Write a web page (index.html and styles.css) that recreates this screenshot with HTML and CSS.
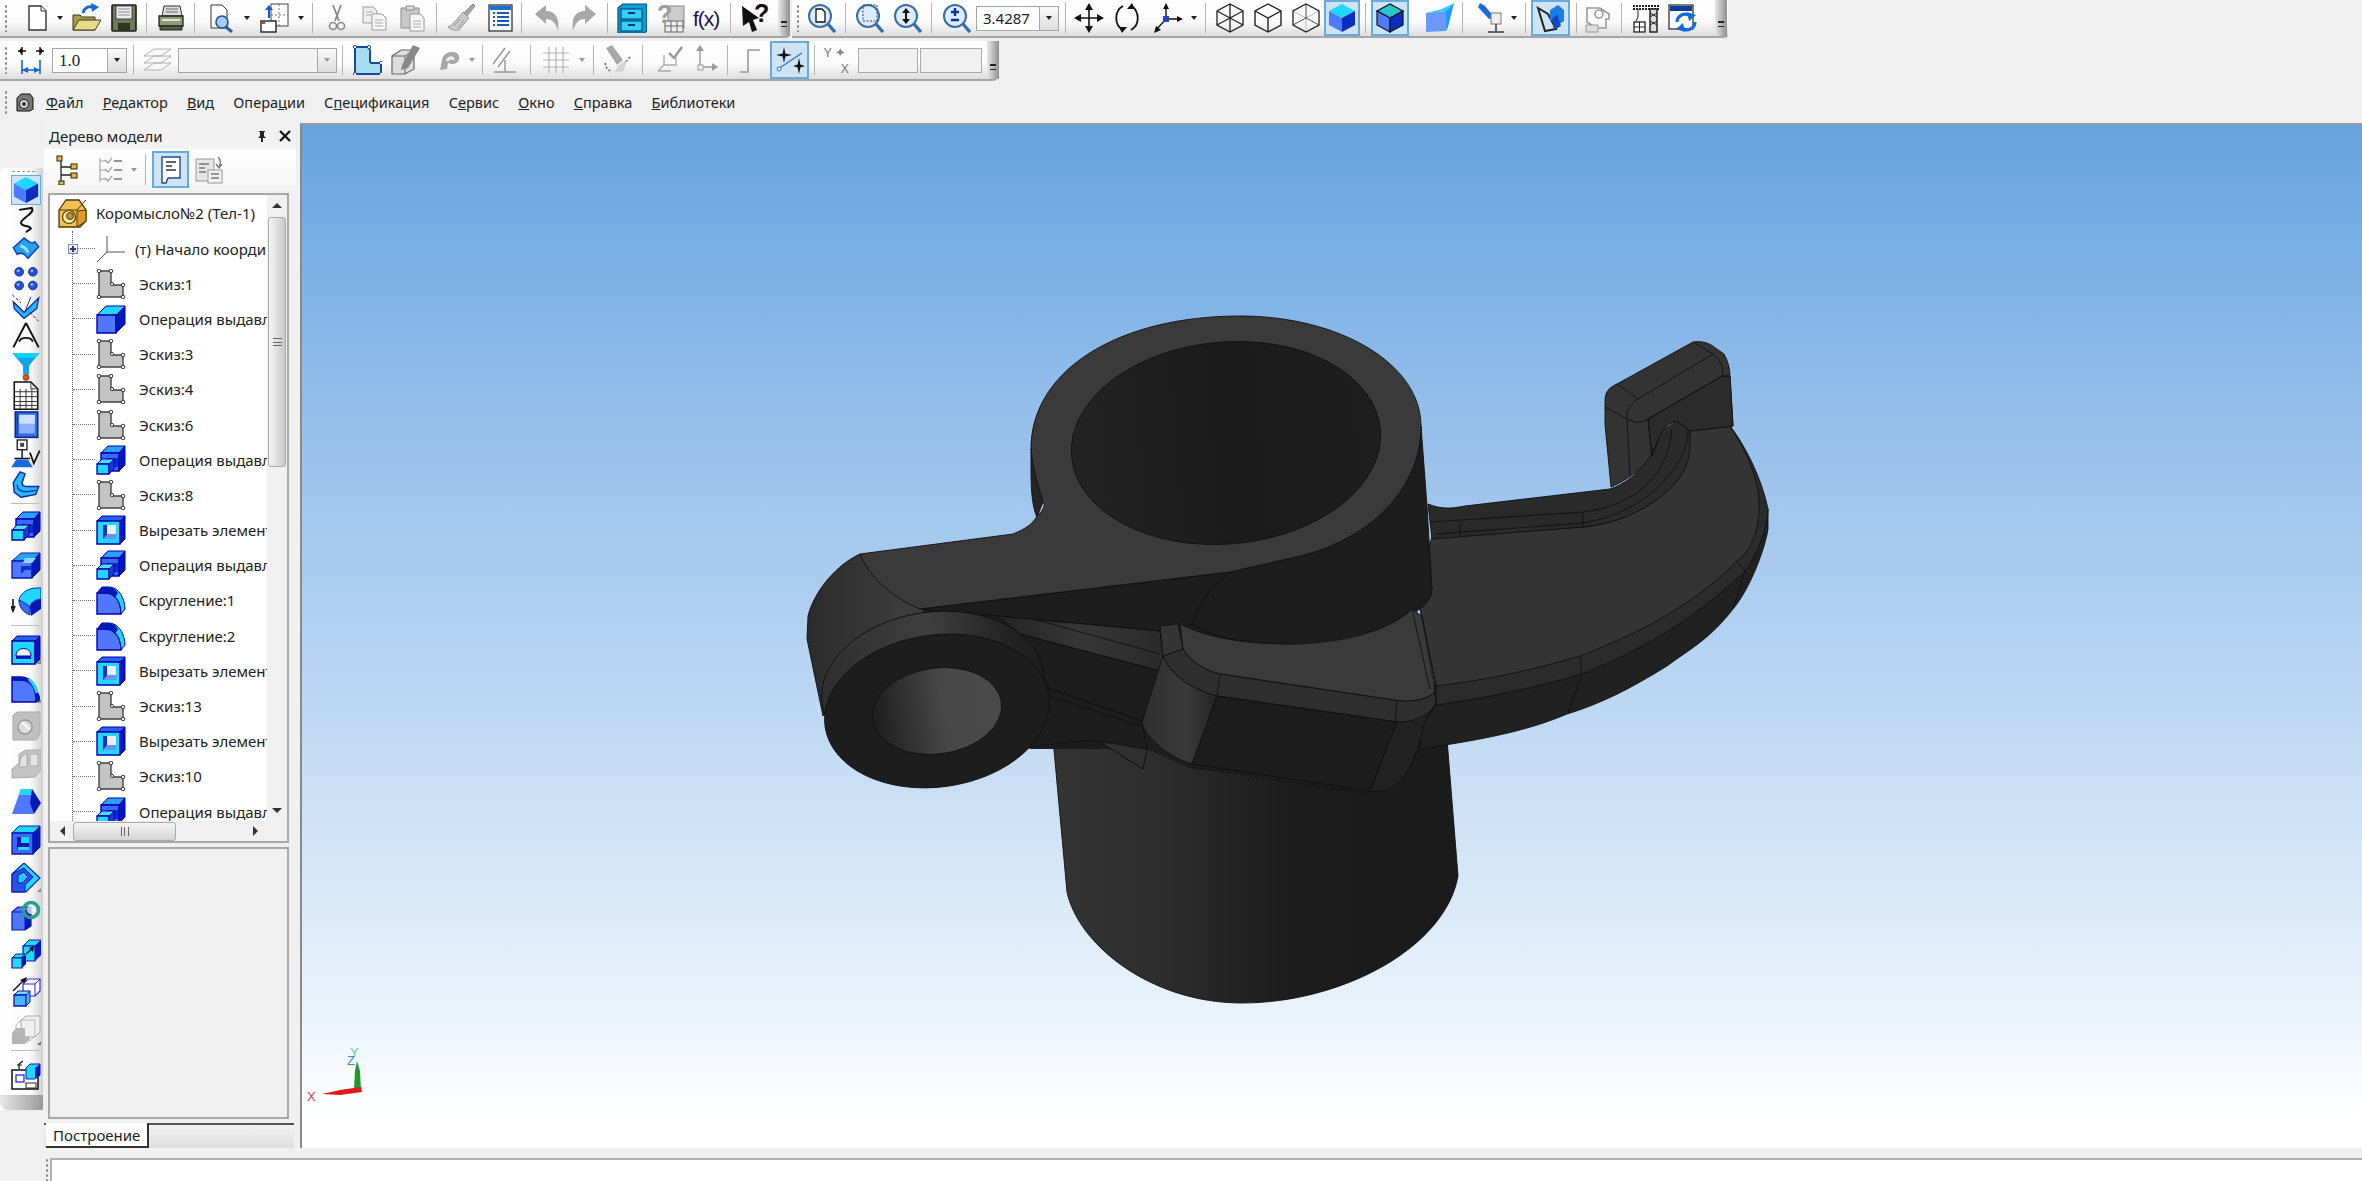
FILE: index.html
```html
<!DOCTYPE html>
<html lang="ru">
<head>
<meta charset="utf-8">
<title>КОМПАС-3D</title>
<link rel="stylesheet" href="styles.css">
</head>
<body>
<svg class="defs" width="0" height="0">
<defs>
<symbol id="new" viewBox="0 0 30 30"><path d="M7 3H19L24 8V27H7Z" fill="#fff" stroke="#333" stroke-width="1.4"/><path d="M19 3V8H24" fill="#eee" stroke="#333"/></symbol>
<symbol id="open" viewBox="0 0 30 30"><path d="M2 12H9L11 14H24V27H2Z" fill="#a89a4a" stroke="#3a3a1a"/><path d="M2 27L8 17H30L24 27Z" fill="#e8dc8a" stroke="#3a3a1a"/><path d="M12 10C13 5 17 3 22 4" fill="none" stroke="#1268d8" stroke-width="3"/><path d="M20 0L28 4L21 9Z" fill="#1268d8"/></symbol>
<symbol id="save" viewBox="0 0 30 30"><rect x="3" y="2" width="24" height="26" rx="1" fill="#6f7a5c" stroke="#1c1c1c" stroke-width="1.6"/><rect x="7" y="3" width="16" height="13" fill="#eee" stroke="#444"/><path d="M9 6H21M9 9H21M9 12H21" stroke="#888"/><rect x="9" y="20" width="12" height="8" fill="#30351f"/></symbol>
<symbol id="print" viewBox="0 0 30 30"><path d="M8 3H24L26 13H6Z" fill="#ddd" stroke="#333"/><path d="M10 6H22M10 9H22" stroke="#666"/><path d="M3 13H27V23H3Z" fill="#8f9a78" stroke="#222" stroke-width="1.3"/><path d="M4 23H26V27H4Z" fill="#565c46" stroke="#222"/><path d="M6 17H24" stroke="#e5e5d5" stroke-width="2"/></symbol>
<symbol id="prev" viewBox="0 0 30 30"><path d="M4 2H15L20 7V25H4Z" fill="#fff" stroke="#333"/><circle cx="15" cy="19" r="6" fill="#a8cdf4" stroke="#22508f" stroke-width="1.6"/><path d="M19 24L25 29" stroke="#2860b0" stroke-width="3"/></symbol>
<symbol id="layout" viewBox="0 0 30 30"><rect x="11" y="1" width="17" height="22" fill="#fff" stroke="#444"/><path d="M19 1V23M11 12H28" stroke="#777" stroke-dasharray="2 2"/><rect x="1" y="18" width="15" height="11" fill="#fff" stroke="#222" stroke-width="1.4"/><rect x="2" y="19" width="3" height="2" fill="#d33"/><path d="M8 15V7H5L9 2L13 7H10V15Z" fill="#1458d8"/></symbol>
<symbol id="sc" viewBox="0 0 30 30"><path d="M11 2L17 18M19 2L13 18" stroke="#888" stroke-width="1.8"/><circle cx="11" cy="23" r="3.5" fill="none" stroke="#888" stroke-width="1.6"/><circle cx="19" cy="23" r="3.5" fill="none" stroke="#888" stroke-width="1.6"/></symbol>
<symbol id="copy" viewBox="0 0 30 30"><path d="M3 4H13L17 8V20H3Z" fill="#eee" stroke="#999"/><path d="M12 11H22L26 15V27H12Z" fill="#f6f6f6" stroke="#999"/><path d="M6 9H13M6 12H11M15 17H23M15 20H23M15 23H23" stroke="#aaa"/></symbol>
<symbol id="paste" viewBox="0 0 30 30"><path d="M4 5H22V25H4Z" fill="#c8c8c8" stroke="#888"/><path d="M9 3H17V7H9Z" fill="#ddd" stroke="#888"/><path d="M13 11H23L27 15V28H13Z" fill="#f6f6f6" stroke="#999"/><path d="M16 18H24M16 21H24M16 24H24" stroke="#aaa"/></symbol>
<symbol id="brush" viewBox="0 0 30 30"><path d="M18 10L27 1L29 3L21 13Z" fill="#aaa" stroke="#888"/><path d="M17 9L23 15L13 27C9 28 5 27 2 24C8 21 12 15 17 9Z" fill="#c9c9c9" stroke="#999"/><path d="M8 23L14 16M12 25L18 17" stroke="#999"/></symbol>
<symbol id="tbl" viewBox="0 0 30 30"><rect x="4" y="2" width="23" height="26" fill="#fff" stroke="#333" stroke-width="1.3"/><rect x="5" y="3" width="21" height="4" fill="#1a6fd0"/><path d="M8 10H10M12 10H24M8 14H10M12 14H24M8 18H10M12 18H24M8 22H10M12 22H24" stroke="#1a5bb0" stroke-width="2"/></symbol>
<symbol id="undo" viewBox="0 0 30 30"><path d="M2 11L13 2V8C22 8 27 14 25 28C23 20 19 16 13 16V21Z" fill="#a8a8a8"/></symbol>
<symbol id="redo" viewBox="0 0 30 30"><path d="M28 11L17 2V8C8 8 3 14 5 28C7 20 11 16 17 16V21Z" fill="#a8a8a8"/></symbol>
<symbol id="cab" viewBox="0 0 30 30"><path d="M1 5L6 1H30V28L27 30H1Z" fill="#0d9ad8" stroke="#0a4a78" stroke-width="1.2"/><rect x="4" y="6" width="21" height="10" fill="#36d0f4" stroke="#063c70"/><rect x="4" y="18" width="21" height="10" fill="#36d0f4" stroke="#063c70"/><rect x="11" y="9" width="7" height="2" fill="#05386a"/><rect x="11" y="21" width="7" height="2" fill="#05386a"/></symbol>
<symbol id="dwg" viewBox="0 0 30 30"><rect x="12" y="3" width="16" height="22" fill="#ccc" stroke="#888"/><rect x="9" y="18" width="18" height="11" fill="#eee" stroke="#666"/><path d="M15 18V29M21 18V29M9 23H27" stroke="#666"/><text x="1" y="20" class="q-g">?</text></symbol>
<symbol id="fx" viewBox="0 0 30 30"><text x="1" y="23" class="fx-t">f(x)</text></symbol>
<symbol id="hlp" viewBox="0 0 30 30"><path d="M2 3L19 15L13 17L17 27L12 29L9 19L3 23Z" fill="#111"/><text x="14" y="19" class="q-b">?</text></symbol>
<symbol id="zpg" viewBox="0 0 30 30"><circle cx="13" cy="13" r="11" fill="#dcecfb" stroke="#3a6da8" stroke-width="2"/><path d="M9 6H15L18 9V19H9Z" fill="#fff" stroke="#111" stroke-width="1.3"/><path d="M21 21L28 29" stroke="#3a6da8" stroke-width="3.4"/></symbol>
<symbol id="zwin" viewBox="0 0 30 30"><circle cx="13" cy="13" r="11" fill="#dcecfb" stroke="#3a6da8" stroke-width="2"/><rect x="8" y="2" width="14" height="16" fill="none" stroke="#444" stroke-dasharray="2 1.5"/><path d="M21 21L28 29" stroke="#3a6da8" stroke-width="3.4"/></symbol>
<symbol id="zud" viewBox="0 0 30 30"><circle cx="13" cy="13" r="11" fill="#dcecfb" stroke="#3a6da8" stroke-width="2"/><path d="M13 5L17 10H9ZM13 21L9 16H17Z" fill="#111"/><path d="M12 9H14V17H12Z" fill="#111"/><path d="M21 21L28 29" stroke="#3a6da8" stroke-width="3.4"/></symbol>
<symbol id="zpm" viewBox="0 0 30 30"><circle cx="13" cy="13" r="11" fill="#dcecfb" stroke="#3a6da8" stroke-width="2"/><path d="M13 5V13M9 9H17M9 17H17" stroke="#10309a" stroke-width="2.4"/><path d="M21 21L28 29" stroke="#3a6da8" stroke-width="3.4"/></symbol>
<symbol id="mv" viewBox="0 0 30 30"><path d="M15 2V28M2 15H28" stroke="#111" stroke-width="1.6"/><path d="M15 0L19 7H11ZM15 30L11 23H19ZM0 15L7 11V19ZM30 15L23 19V11Z" fill="#111"/></symbol>
<symbol id="rot" viewBox="0 0 30 30"><path d="M11 3C2 8 2 22 11 27" fill="none" stroke="#111" stroke-width="1.8"/><path d="M19 3C28 8 28 22 19 27" fill="none" stroke="#111" stroke-width="1.8"/><path d="M7 24L15 24L10 30ZM23 6L15 6L20 0Z" fill="#111"/></symbol>
<symbol id="axs" viewBox="0 0 30 30"><path d="M13 3V16L3 27M13 16H27" stroke="#111" stroke-width="1.4" fill="none"/><path d="M13 0L16 6H10ZM30 16L24 19V13ZM1 30L3 23L8 27Z" fill="#111"/><rect x="10" y="13" width="6" height="6" fill="#2a3fcc"/></symbol>
<symbol id="wf1" viewBox="0 0 30 30"><path d="M15 1L28 8V22L15 29L2 22V8ZM2 8L28 22M28 8L2 22M15 1V29" fill="none" stroke="#222" stroke-width="1.3"/></symbol>
<symbol id="wf2" viewBox="0 0 30 30"><path d="M15 1L28 8V22L15 29L2 22V8ZM2 8L15 15L28 8M15 15V29" fill="none" stroke="#222" stroke-width="1.4"/></symbol>
<symbol id="wf3" viewBox="0 0 30 30"><path d="M2 8L15 15V29M15 15L28 8" fill="none" stroke="#bbb"/><path d="M15 1L28 8V22L15 29L2 22V8ZM2 8L15 1" fill="none" stroke="#222" stroke-width="1.3"/><path d="M2 22L15 15L28 22M15 15V1" fill="none" stroke="#222" stroke-width=".8"/></symbol>
<symbol id="sh1" viewBox="0 0 30 30"><path d="M2 8L15 1L28 8L15 15Z" fill="#1ed8ff"/><path d="M2 8L15 15V29L2 22Z" fill="#4c7bff"/><path d="M15 15L28 8V22L15 29Z" fill="#0b2ec0"/></symbol>
<symbol id="sh2" viewBox="0 0 30 30"><path d="M2 8L15 1L28 8L15 15Z" fill="#27c6c8" stroke="#112" stroke-width="1.2"/><path d="M2 8L15 15V29L2 22Z" fill="#4c7bff" stroke="#112" stroke-width="1.2"/><path d="M15 15L28 8V22L15 29Z" fill="#0b2ec0" stroke="#112" stroke-width="1.2"/></symbol>
<symbol id="prs" viewBox="0 0 30 30"><path d="M2 10L22 8V28L2 29Z" fill="#6a98ff"/><path d="M2 10L18 6L30 0L22 8Z" fill="#28d0ff"/><path d="M22 8L30 0L24 24L22 28Z" fill="#1c9cff"/></symbol>
<symbol id="lamp" viewBox="0 0 30 30"><path d="M4 0L9 3L18 14L13 16L2 4Z" fill="#1d6ad8"/><rect x="15" y="10" width="10" height="11" fill="#eee" stroke="#777"/><path d="M20 21V28M12 29H28" stroke="#666" stroke-width="2"/></symbol>
<symbol id="act" viewBox="0 0 30 30"><path d="M2 5L12 11L20 26L9 28Z" fill="none" stroke="#222" stroke-width="2"/><path d="M14 7L22 2L28 7V18L22 22L14 17Z" fill="#1d7de8"/><path d="M16 16L21 11L25 23L18 27Z" fill="#1248c0"/></symbol>
<symbol id="par" viewBox="0 0 30 30"><path d="M3 5H16L25 11V16H22V25H12L3 19Z" fill="none" stroke="#9a9a9a" stroke-width="1.6"/><circle cx="15" cy="11" r="4" fill="none" stroke="#9a9a9a" stroke-width="1.6"/><path d="M2 22H14V29H2Z" fill="#ddd" stroke="#999"/></symbol>
<symbol id="crane" viewBox="0 0 30 30"><path d="M1 3H28M1 6H28" stroke="#222" stroke-width="2" stroke-dasharray="2 1"/><rect x="18" y="6" width="7" height="23" fill="#ddd" stroke="#222" stroke-width="1.5"/><path d="M18 10L25 14M25 10L18 14M18 18L25 22M25 18L18 22" stroke="#222"/><path d="M6 6V14L4 18" stroke="#222" fill="none"/><rect x="2" y="19" width="11" height="10" fill="#fff" stroke="#222" stroke-width="1.3"/><path d="M7.5 19V29M2 24H13" stroke="#222"/></symbol>
<symbol id="upd" viewBox="0 0 30 30"><rect x="1" y="2" width="24" height="24" fill="#fff" stroke="#222" stroke-width="1.2"/><rect x="2" y="3" width="22" height="5" fill="#0c3c9c"/><path d="M9 19A8 8 0 0 1 22 13M27 19A8 8 0 0 1 14 25" fill="none" stroke="#0f6be0" stroke-width="3.2"/><path d="M19 9L28 12L21 18ZM17 29L8 26L15 20Z" fill="#0f6be0"/></symbol>
<symbol id="dim" viewBox="0 0 30 30"><path d="M5 2V10M1 6H9M23 2V10M19 6H27" stroke="#111" stroke-width="1.4"/><path d="M4 3L6 6L4 9L2 6ZM24 3L26 6L24 9L22 6Z" fill="#111"/><path d="M5 15V29M23 15V29M5 25H23" stroke="#1466d8" stroke-width="1.6"/><path d="M5 25L11 22V28ZM23 25L17 22V28Z" fill="#1466d8"/></symbol>
<symbol id="lay" viewBox="0 0 30 30"><path d="M2 11L12 4H29L19 11ZM2 18L12 11H29L19 18ZM2 25L12 18H29L19 25Z" fill="#f7f7f7" stroke="#aaa" stroke-width=".9"/></symbol>
<symbol id="skt" viewBox="0 0 30 30"><path d="M3 2H15C17 2 19 5 18 9V16C18 17 19 18 20 18H29V29H3Z" fill="#a8dcf0" stroke="#16489c" stroke-width="2"/><g fill="#fff" stroke="#16489c"><circle cx="3" cy="2" r="1.6"/><circle cx="17" cy="2" r="1.6"/><circle cx="29" cy="18" r="1.6"/><circle cx="29" cy="29" r="1.6"/><circle cx="3" cy="29" r="1.6"/></g></symbol>
<symbol id="pen" viewBox="0 0 30 30"><path d="M2 11L11 5H24V24L15 29H2Z" fill="#ddd" stroke="#666" stroke-width="1.2"/><path d="M2 11H15V29M15 11L24 5" stroke="#666" fill="none"/><path d="M12 20L23 0L30 3L18 23L11 25Z" fill="#888"/></symbol>
<symbol id="arc" viewBox="0 0 30 30"><path d="M6 25L8 15C10 6 22 4 25 11C27 17 20 21 14 18L13 24Z" fill="#a8a8a8"/><path d="M13 16C15 12 19 12 19 15" fill="none" stroke="#f0f0f0" stroke-width="3"/></symbol>
<symbol id="pl" viewBox="0 0 30 30"><path d="M3 19L15 3M8 22L20 6M4 27H26M15 15V27" stroke="#999" stroke-width="1.5" fill="none"/></symbol>
<symbol id="grd" viewBox="0 0 30 30"><path d="M8 2V28M15 2V28M22 2V28M2 8H28M2 15H28M2 22H28" stroke="#b5b5b5" stroke-width="1.2"/></symbol>
<symbol id="spot" viewBox="0 0 30 30"><path d="M4 3L10 0L21 15L15 20Z" fill="#a8a8a8"/><path d="M3 18L5 24L10 27M22 20L26 14L29 11" fill="none" stroke="#666" stroke-dasharray="2 2" stroke-width="1.6"/><path d="M16 21L25 14L22 26L12 28Z" fill="#d5d5d5"/></symbol>
<symbol id="chk" viewBox="0 0 30 30"><path d="M3 26L9 20V10M9 20H21V12M3 26H16" fill="none" stroke="#aaa" stroke-width="1.3"/><path d="M14 8L19 13L27 2" fill="none" stroke="#999" stroke-width="2.4"/></symbol>
<symbol id="ort" viewBox="0 0 30 30"><path d="M11 4V22H26" stroke="#999" stroke-width="1.4" fill="none"/><path d="M11 0L15 6H7ZM29 22L23 26V18Z" fill="#999"/><rect x="9" y="20" width="5" height="5" fill="#f0f0f0" stroke="#999"/></symbol>
<symbol id="stp" viewBox="0 0 30 30"><path d="M5 27H13V5H25" fill="none" stroke="#999" stroke-width="1.6"/></symbol>
<symbol id="snap" viewBox="0 0 30 30"><path d="M3 24L27 8" stroke="#3070d0" stroke-width="1.4"/><circle cx="4" cy="24" r="2" fill="#fff" stroke="#3070d0"/><path d="M9 2L10.4 8.6L17 10L10.4 11.4L9 18L7.6 11.4L1 10L7.6 8.6ZM24 13L25.4 19.6L30 21L25.4 22.4L24 29L22.6 22.4L18 21L22.6 19.6Z" fill="#111"/></symbol>
<symbol id="sk" viewBox="0 0 30 30"><path d="M3 2H15V13C15 15 16 16 18 16H27V28H3Z" fill="#c4c4c4" stroke="#444" stroke-width="1.4"/><g fill="#fff" stroke="#333"><circle cx="3" cy="2" r="1.8"/><circle cx="15" cy="2" r="1.8"/><circle cx="16" cy="15" r="1.6"/><circle cx="27" cy="16" r="1.8"/><circle cx="27" cy="28" r="1.8"/><circle cx="3" cy="28" r="1.8"/></g></symbol>
<symbol id="ext" viewBox="0 0 30 30"><path d="M1 11L10 2H29L20 11Z" fill="#1ed8ff" stroke="#0000b0"/><path d="M1 11H20V29H1Z" fill="#4f78ff" stroke="#0000b0" stroke-width="1.4"/><path d="M20 11L29 2V20L20 29Z" fill="#0018b8" stroke="#0000b0"/></symbol>
<symbol id="op" viewBox="0 0 30 30"><path d="M5 8L12 1H29L23 8Z" fill="#2da0ff" stroke="#0000b0"/><path d="M5 8H23V26H5Z" fill="#3a68f8" stroke="#0000b0" stroke-width="1.4"/><path d="M23 8L29 1V20L23 26Z" fill="#0018b8" stroke="#0000b0"/><path d="M10 13H22V22H14Z" fill="#0e2cc8"/><path d="M1 19L6 14H18L13 19Z" fill="#4ce0ff" stroke="#0000b0"/><path d="M1 19H13V29H1Z" fill="#1ed8ff" stroke="#0000b0" stroke-width="1.3"/><path d="M13 19L18 14V24L13 29Z" fill="#1040d8" stroke="#0000b0"/></symbol>
<symbol id="cutb" viewBox="0 0 30 30"><path d="M1 6L6 1H29L24 6Z" fill="#2a60f0" stroke="#0000b0"/><path d="M1 6H24V29H1Z" fill="#1ed8ff" stroke="#0000b0" stroke-width="1.4"/><path d="M24 6L29 1V24L24 29Z" fill="#0018b8" stroke="#0000b0"/><rect x="7" y="10" width="13" height="14" fill="#1030c8"/><path d="M11 10H20V19H11Z" fill="#e8f0ff"/><path d="M7 24L11 19H20V24Z" fill="#6a90ff"/></symbol>
<symbol id="fil" viewBox="0 0 30 30"><path d="M1 29V8H10C20 8 25 18 25 29Z" fill="#4f78ff" stroke="#0000b0" stroke-width="1.4"/><path d="M1 8L6 2H13C23 2 29 14 29 24L25 29C25 18 20 8 10 8Z" fill="#1ed8ff" stroke="#0000b0"/><path d="M1 8L6 2H13C18 3 20 5 22 8L19 13C16 10 13 8 10 8Z" fill="#0018b8"/></symbol>
<symbol id="rootb" viewBox="0 0 30 30"><path d="M2 12L9 2H22L29 12V23L23 29H2Z" fill="#f0c050" stroke="#4a3a08" stroke-width="1.3"/><path d="M2 12H20L29 2" fill="none" stroke="#4a3a08"/><path d="M20 13L29 12V23L20 29Z" fill="#dc9a2a" stroke="#4a3a08"/><circle cx="12" cy="19" r="6.5" fill="#fbe8a8" stroke="#4a3a08" stroke-width="1.2"/><circle cx="13" cy="18" r="3.5" fill="#c89030" stroke="#4a3a08"/></symbol>
<symbol id="org" viewBox="0 0 30 30"><path d="M11 2V18H29M11 18L1 28" fill="none" stroke="#555" stroke-width="1"/></symbol>
<symbol id="ttree" viewBox="0 0 30 30"><path d="M9 6V27M9 12H20M9 20H20" stroke="#222" stroke-width="1.3" fill="none"/><g fill="#e8b838" stroke="#222"><rect x="5" y="1" width="5" height="5"/><rect x="19" y="9" width="6" height="5"/><rect x="19" y="18" width="6" height="5"/><rect x="7" y="26" width="5" height="4"/></g></symbol>
<symbol id="tchk" viewBox="0 0 30 30"><path d="M5 3V27M5 6H10M5 15H10M5 24H10" stroke="#999" fill="none"/><path d="M10 5L13 8L17 3M10 14L13 17L17 12M10 23L13 26L17 21" stroke="#999" fill="none" stroke-width="1.2"/><path d="M19 6H27M19 15H27M19 24H27" stroke="#999" stroke-width="2"/></symbol>
<symbol id="tdoc" viewBox="0 0 30 30"><path d="M6 2H24V23H12L10 28H6Z" fill="#fff" stroke="#1f4e8f" stroke-width="1.4"/><path d="M10 7H20M10 11H16M10 15H20" stroke="#333" stroke-width="1.6"/></symbol>
<symbol id="tcmp" viewBox="0 0 30 30"><rect x="2" y="4" width="18" height="22" fill="#e6e6e6" stroke="#999"/><rect x="14" y="15" width="14" height="13" fill="#f2f2f2" stroke="#999"/><path d="M5 9H15M5 13H11M5 17H12M17 19H25M17 23H25" stroke="#777" stroke-width="1.6"/><path d="M24 2C27 5 27 8 25 11M22 9L25 13L28 9" fill="none" stroke="#777" stroke-width="1.3"/></symbol>
<symbol id="squig" viewBox="0 0 30 30"><path d="M8 5L21 3C25 9 8 14 10 19C12 23 18 20 20 24L15 28" fill="none" stroke="#111" stroke-width="2"/></symbol>
<symbol id="sheet" viewBox="0 0 30 30"><path d="M2 14L13 4C17 7 20 11 24 8L28 13L17 25C14 21 10 18 6 21Z" fill="#28a0f0" stroke="#0a3cb0" stroke-width="1.4"/><path d="M9 12C13 13 16 16 17 19" stroke="#8ce4ff" stroke-width="3" fill="none"/></symbol>
<symbol id="dots" viewBox="0 0 30 30"><g fill="#2a50d8" stroke="#0a2a90"><circle cx="8" cy="8" r="4.4"/><circle cx="22" cy="8" r="4.4"/><circle cx="8" cy="22" r="4.4"/><circle cx="22" cy="22" r="4.4"/></g><g fill="#9ab8ff"><circle cx="7" cy="7" r="1.4"/><circle cx="21" cy="7" r="1.4"/><circle cx="7" cy="21" r="1.4"/><circle cx="21" cy="21" r="1.4"/></g></symbol>
<symbol id="bend" viewBox="0 0 30 30"><path d="M2 9L13 20L28 5L26 16L13 26L3 16Z" fill="#28b8f8" stroke="#0a2ab0" stroke-width="1.3"/><path d="M20 4L14 19M13 20L2 9" stroke="#0a2ab0" fill="none"/><path d="M1 2L10 10M19 20L28 29" stroke="#222" stroke-dasharray="3 2"/></symbol>
<symbol id="cmp" viewBox="0 0 30 30"><path d="M15 1L2 26M15 1L28 26M8 20C10 15 20 15 22 20" fill="none" stroke="#111" stroke-width="2"/></symbol>
<symbol id="fun" viewBox="0 0 30 30"><path d="M1 1H29L18 14V23H12V14Z" fill="#0ea4ec"/><path d="M1 1H29L24 6H6Z" fill="#10d4f4"/><circle cx="15" cy="26" r="3" fill="#d85030" stroke="#aa3010"/></symbol>
<symbol id="gtb" viewBox="0 0 30 30"><path d="M3 1H20L27 8V29H3Z" fill="#fff" stroke="#111" stroke-width="1.6"/><path d="M20 1V8H27M3 11H27M3 16H27M3 21H27M3 25H27M9 8V29M15 8V29M21 8V29" stroke="#333" fill="none"/></symbol>
<symbol id="book" viewBox="0 0 30 30"><rect x="4" y="2" width="23" height="26" fill="#3a6ce0" stroke="#0a2a90" stroke-width="1.6"/><rect x="8" y="5" width="16" height="19" fill="#8ab0f8"/><rect x="8" y="5" width="16" height="9" fill="#d0e0ff"/><path d="M6 3V27" stroke="#0a2a90"/></symbol>
<symbol id="d3" viewBox="0 0 30 30"><rect x="6" y="1" width="10" height="10" fill="#fff" stroke="#111" stroke-width="1.3"/><rect x="9" y="4" width="4" height="4" fill="#444"/><path d="M11 11V20M3 20H19" stroke="#111" stroke-width="1.5"/><path d="M0 29L5 21H17L22 29Z" fill="#1868e0"/><path d="M19 14L23 25L29 12" fill="none" stroke="#111" stroke-width="1.8"/></symbol>
<symbol id="brk" viewBox="0 0 30 30"><path d="M2 14L9 3L14 5L11 14C11 17 14 18 17 18H28L25 26L10 29L3 24Z" fill="#28b8f8" stroke="#0a2ab0" stroke-width="1.5"/><path d="M6 16C6 22 12 24 18 23L25 22" fill="none" stroke="#0a2ab0" stroke-width="1.3"/></symbol>
<symbol id="box2" viewBox="0 0 30 30"><path d="M1 12L10 4H29L21 12Z" fill="#2aa0ff" stroke="#0a1ab0"/><path d="M1 12H21V29H1Z" fill="#4f78ff" stroke="#0a1ab0" stroke-width="1.3"/><path d="M21 12L29 4V21L21 29Z" fill="#0018b8" stroke="#0a1ab0"/><path d="M10 17H20V21H14L10 25Z" fill="#1030d0"/><path d="M14 9H25L21 14H12Z" fill="#8fd8ff"/></symbol>
<symbol id="filarr" viewBox="0 0 30 30"><path d="M2 12V21M0 19L2 24L4 19" stroke="#111" stroke-width="1.6" fill="none"/><path d="M8 13C10 5 18 1 26 1H30V12C22 13 20 16 19 20C12 17 8 16 8 13Z" fill="#1ed8ff" stroke="#0a2ab0"/><path d="M8 13C12 15 16 17 19 20V28C14 26 8 22 8 13Z" fill="#3a6cf0" stroke="#0a2ab0"/><path d="M19 20C20 15 24 13 30 12V22L20 29Z" fill="#0018b8"/></symbol>
<symbol id="dome" viewBox="0 0 30 30"><path d="M1 6L6 1H29L24 6Z" fill="#2a60f0" stroke="#0000b0"/><path d="M1 6H24V29H1Z" fill="#1ed8ff" stroke="#0000b0" stroke-width="1.4"/><path d="M24 6L29 1V24L24 29Z" fill="#0018b8" stroke="#0000b0"/><path d="M5 21C5 11 20 11 20 21Z" fill="#f0f4ff" stroke="#0000b0"/><path d="M5 21H20V24H5Z" fill="#0018b8"/><path d="M25 29H30V24Z" fill="#888"/></symbol>
<symbol id="fil2" viewBox="0 0 30 30"><path d="M1 29V4H10C20 4 25 14 25 29Z" fill="#4f78ff" stroke="#0000b0" stroke-width="1.4"/><path d="M1 4H10C18 4 22 8 25 13L29 24V29H25C25 16 20 8 10 8H1Z" fill="#0018b8"/><path d="M18 6C22 10 25 15 26 20" stroke="#1ed8ff" stroke-width="3" fill="none"/><path d="M26 30H30V26Z" fill="#888"/></symbol>
<symbol id="g1" viewBox="0 0 30 30"><path d="M2 5L6 1H29V23L25 29H2Z" fill="#c0c0c0" stroke="#aaa"/><circle cx="14" cy="16" r="7" fill="#dcdcdc" stroke="#999" stroke-width="1.5"/><path d="M11 11L18 18" stroke="#fff" stroke-width="2"/></symbol>
<symbol id="g2" viewBox="0 0 30 30"><path d="M1 29V20L8 14V5L15 1H30V20L24 28Z" fill="#c4c4c4" stroke="#aaa"/><path d="M10 8L16 4V18H8ZM19 5H27V17H19Z" fill="#e4e4e4" stroke="#aaa"/></symbol>
<symbol id="frus" viewBox="0 0 30 30"><path d="M10 2H21L29 15L22 27H1Z" fill="#4f78ff"/><path d="M10 2H21L25 8H8Z" fill="#1ed8ff"/><path d="M21 2L30 16L23 27L19 16Z" fill="#0018b8"/></symbol>
<symbol id="boxw" viewBox="0 0 30 30"><path d="M1 8L8 1H29L22 8Z" fill="#1ed8ff" stroke="#0a1ab0"/><path d="M1 8H22V29H1Z" fill="#3a68f8" stroke="#0a1ab0" stroke-width="1.3"/><path d="M22 8L29 1V22L22 29Z" fill="#0018b8" stroke="#0a1ab0"/><rect x="6" y="12" width="12" height="13" fill="#0a1ab0"/><path d="M10 12H18V18H10ZM7 22H18V25H7Z" fill="#1ed8ff"/></symbol>
<symbol id="dia" viewBox="0 0 30 30"><path d="M13 0L29 15L15 29H1V11Z" fill="#1ed8ff" stroke="#0a1ab0" stroke-width="1.2"/><path d="M1 11L13 5L22 14L14 22V29H1Z" fill="#2a50e8" stroke="#0a1ab0"/><path d="M7 12L13 9L17 14L11 20H7Z" fill="#28c8ff" stroke="#0a1ab0"/><path d="M26 29H30V25Z" fill="#888"/></symbol>
<symbol id="tor" viewBox="0 0 30 30"><path d="M1 11L7 6H20V25L14 29H1Z" fill="#4f78ff" stroke="#0a1ab0" stroke-width="1.2"/><path d="M14 11V29M1 11H14L20 6" stroke="#0a1ab0" fill="none"/><path d="M14 11L20 6V25L14 29Z" fill="#0018b8"/><circle cx="20" cy="9" r="7.5" fill="none" stroke="#28a090" stroke-width="3.6"/><circle cx="20" cy="9" r="4" fill="#eef" opacity=".8"/></symbol>
<symbol id="scl" viewBox="0 0 30 30"><path d="M12 7L18 1H30L24 7Z" fill="#1ed8ff" stroke="#0a1ab0"/><path d="M12 7H24V22H12Z" fill="#1ed8ff" stroke="#0a1ab0" stroke-width="1.2"/><path d="M24 7L30 1V16L24 22Z" fill="#0018b8"/><path d="M1 19L5 15H14L10 19Z" fill="#1ed8ff" stroke="#0a1ab0"/><path d="M1 19H11V29H1Z" fill="#28d8ff" stroke="#0a1ab0" stroke-width="1.2"/><path d="M11 19L15 15V25L11 29Z" fill="#0018b8"/><path d="M15 15L22 9" stroke="#111" stroke-width="1.3"/><path d="M23 7L22 13L18 9Z" fill="#111"/></symbol>
<symbol id="cpa" viewBox="0 0 30 30"><path d="M2 14L14 2" stroke="#111" stroke-width="1.4"/><path d="M16 0L14 7L9 3Z" fill="#111"/><path d="M12 7L17 2H29V14L24 19H12Z" fill="#fff" stroke="#2a2ad8" stroke-width="1.2"/><path d="M12 7H24V19M24 7L29 2" stroke="#2a2ad8" fill="none"/><path d="M3 18L7 14H19L15 18Z" fill="#7cd4ff" stroke="#0a1ab0"/><path d="M3 18H15V29H3Z" fill="#48b4ff" stroke="#0a1ab0" stroke-width="1.3"/><path d="M15 18L19 14V25L15 29Z" fill="#48b4ff" stroke="#0a1ab0"/></symbol>
<symbol id="g3" viewBox="0 0 30 30"><path d="M10 6L15 1H29V17L24 22H10Z" fill="#f0f0f0" stroke="#aaa"/><path d="M5 10L10 5H24V21L19 26H5Z" fill="none" stroke="#bbb"/><path d="M1 18L5 13H14V22L19 22V24L14 29H1Z" fill="#b5b5b5"/><path d="M26 30H30V26Z" fill="#777"/></symbol>
<symbol id="assy" viewBox="0 0 30 30"><rect x="1" y="10" width="26" height="19" fill="#fff" stroke="#111" stroke-width="1.5"/><rect x="5" y="15" width="8" height="7" fill="#fff" stroke="#2a2ad8" stroke-width="1.3"/><rect x="15" y="23" width="10" height="5" fill="#fff" stroke="#222"/><path d="M8 9V4L12 1M6 5H11" stroke="#111" stroke-width="1.2" fill="none"/><path d="M15 8L19 4H29V15L24 19H15Z" fill="#1ed8ff" stroke="#0a1ab0"/><path d="M24 8L29 4V15L24 19Z" fill="#0018b8"/></symbol>
<symbol id="mnu" viewBox="0 0 20 20"><path d="M2 6L6 2H15L18 6V17L15 19H2Z" fill="#777" stroke="#111"/><circle cx="9" cy="12" r="4.5" fill="#ddd" stroke="#111"/><circle cx="9" cy="12" r="2" fill="#333"/></symbol>
</defs>
</svg>

<div class="app">
  <header class="top">
    <div class="tbrow first">
      <div class="tbar t1">
        <i class="dots"></i>
        <svg class="i m14"><use href="#new"/></svg><b class="dd m5"></b>
        <svg class="i m8"><use href="#open"/></svg>
        <svg class="i m8"><use href="#save"/></svg>
        <i class="sep m7"></i>
        <svg class="i m9"><use href="#print"/></svg>
        <i class="sep m8"></i>
        <svg class="i m12"><use href="#prev"/></svg><b class="dd m7"></b>
        <svg class="i m10"><use href="#layout"/></svg><b class="dd m8"></b>
        <i class="sep m8"></i>
        <svg class="i m9"><use href="#sc"/></svg>
        <svg class="i m8"><use href="#copy"/></svg>
        <svg class="i m7"><use href="#paste"/></svg>
        <i class="sep m9"></i>
        <svg class="i m9"><use href="#brush"/></svg>
        <svg class="i m9"><use href="#tbl"/></svg>
        <i class="sep m6"></i>
        <svg class="i m11"><use href="#undo"/></svg>
        <svg class="i m5"><use href="#redo"/></svg>
        <i class="sep m9"></i>
        <svg class="i m9"><use href="#cab"/></svg>
        <svg class="i m9"><use href="#dwg"/></svg>
        <svg class="i m6"><use href="#fx"/></svg>
        <i class="sep m8"></i>
        <svg class="i m9"><use href="#hlp"/></svg>
        <i class="grip m8"></i>
      </div>
      <div class="tbar t2">
        <i class="dots"></i>
        <svg class="i m7"><use href="#zpg"/></svg>
        <i class="sep m8"></i>
        <svg class="i m9"><use href="#zwin"/></svg>
        <svg class="i m8"><use href="#zud"/></svg>
        <i class="sep m8"></i>
        <svg class="i m10"><use href="#zpm"/></svg>
        <div class="combo cz m4"><span>3.4287</span><u class="cbtn"><b class="dd"></b></u></div>
        <i class="sep m6"></i>
        <svg class="i m8"><use href="#mv"/></svg>
        <svg class="i m8"><use href="#rot"/></svg>
        <svg class="i m11"><use href="#axs"/></svg><b class="dd m8"></b>
        <i class="sep m8"></i>
        <svg class="i m9"><use href="#wf1"/></svg>
        <svg class="i m8"><use href="#wf2"/></svg>
        <svg class="i m8"><use href="#wf3"/></svg>
        <span class="on w36 m3"><svg class="i"><use href="#sh1"/></svg></span>
        <i class="sep m5"></i>
        <span class="on w38 m5"><svg class="i"><use href="#sh2"/></svg></span>
        <svg class="i m15"><use href="#prs"/></svg>
        <i class="sep m8"></i>
        <svg class="i m13"><use href="#lamp"/></svg><b class="dd m5"></b>
        <i class="sep m8"></i>
        <span class="on w39 m5"><svg class="i"><use href="#act"/></svg></span>
        <i class="sep m6"></i>
        <svg class="i m7"><use href="#par"/></svg>
        <i class="sep m7"></i>
        <svg class="i m10"><use href="#crane"/></svg>
        <svg class="i m6"><use href="#upd"/></svg>
        <i class="grip m17"></i>
      </div>
    </div>
    <div class="tbrow second">
      <div class="tbar t3">
        <i class="dots"></i>
        <svg class="i m9"><use href="#dim"/></svg>
        <div class="combo c1 m5"><span class="serif">1.0</span><u class="cbtn"><b class="dd"></b></u></div>
        <i class="sep m6"></i>
        <svg class="i m8"><use href="#lay"/></svg>
        <div class="combo c2 m6"><span></span><u class="cbtn"><b class="dd off"></b></u></div>
        <i class="sep m5"></i>
        <svg class="i m9"><use href="#skt"/></svg>
        <svg class="i m8"><use href="#pen"/></svg>
        <svg class="i m14"><use href="#arc"/></svg><b class="dd off m5"></b>
        <i class="sep m7"></i>
        <svg class="i m7"><use href="#pl"/></svg>
        <i class="sep m10"></i>
        <svg class="i m10"><use href="#grd"/></svg><b class="dd off m8"></b>
        <i class="sep m8"></i>
        <svg class="i m8"><use href="#spot"/></svg>
        <i class="sep m10"></i>
        <svg class="i m12"><use href="#chk"/></svg>
        <svg class="i m4"><use href="#ort"/></svg>
        <i class="sep m8"></i>
        <svg class="i m7"><use href="#stp"/></svg>
        <span class="on w39 m5"><svg class="i"><use href="#snap"/></svg></span>
        <i class="sep m5"></i>
        <div class="xy m6"><span>Y <em class="star">✦</em></span><span class="xl">X</span></div>
        <i class="field w60 m5"></i>
        <i class="field w62 m2"></i>
        <i class="grip m5"></i>
      </div>
    </div>
    <nav class="menu">
      <i class="dots"></i>
      <svg class="mico"><use href="#mnu"/></svg>
      <ul>
        <li><u>Ф</u>айл</li><li><u>Р</u>едактор</li><li><u>В</u>ид</li><li>Опера<u>ц</u>ии</li><li>С<u>п</u>ецификация</li><li>С<u>е</u>рвис</li><li><u>О</u>кно</li><li><u>С</u>правка</li><li><u>Б</u>иблиотеки</li>
      </ul>
    </nav>
  </header>

  <main class="work">
    <aside class="ltools">
      <i class="hdots"></i>
      <div class="lgrp a">
        <span class="on lact"><svg class="i"><use href="#sh1"/></svg></span>
        <svg class="i"><use href="#squig"/></svg>
        <svg class="i"><use href="#sheet"/></svg>
        <svg class="i"><use href="#dots"/></svg>
        <svg class="i"><use href="#bend"/></svg>
        <svg class="i"><use href="#cmp"/></svg>
        <svg class="i"><use href="#fun"/></svg>
        <svg class="i"><use href="#gtb"/></svg>
        <svg class="i"><use href="#book"/></svg>
        <svg class="i"><use href="#d3"/></svg>
        <svg class="i"><use href="#brk"/></svg>
      </div>
      <hr class="ldiv first">
      <div class="lgrp b">
        <svg class="i"><use href="#op"/></svg>
        <svg class="i"><use href="#box2"/></svg>
        <svg class="i"><use href="#filarr"/></svg>
      </div>
      <hr class="ldiv wide">
      <div class="lgrp b">
        <svg class="i"><use href="#dome"/></svg>
        <svg class="i"><use href="#fil2"/></svg>
        <svg class="i"><use href="#g1"/></svg>
        <svg class="i"><use href="#g2"/></svg>
        <svg class="i"><use href="#frus"/></svg>
        <svg class="i"><use href="#boxw"/></svg>
        <svg class="i"><use href="#dia"/></svg>
        <svg class="i"><use href="#tor"/></svg>
        <svg class="i"><use href="#scl"/></svg>
        <svg class="i"><use href="#cpa"/></svg>
        <svg class="i"><use href="#g3"/></svg>
      </div>
      <hr class="ldiv">
      <div class="lgrp b"><svg class="i"><use href="#assy"/></svg></div>
      <div class="lend"><b class="lmore"></b></div>
    </aside>

    <section class="panel">
      <div class="ptitle"><span>Дерево модели</span><span class="pbtn"><svg class="pin" viewBox="0 0 12 12"><path d="M3 1H9V2H8V6L10 8H7V12H5V8H2L4 6V2H3Z" fill="#222"/></svg><svg class="pin" viewBox="0 0 12 12"><path d="M1 1L11 11M11 1L1 11" stroke="#111" stroke-width="2.2"/></svg></span></div>
      <div class="ptools">
        <svg class="i"><use href="#ttree"/></svg>
        <svg class="i m9x"><use href="#tchk"/></svg>
        <b class="dd off m6"></b>
        <i class="sep m8"></i>
        <span class="on w37 m6"><svg class="i"><use href="#tdoc"/></svg></span>
        <svg class="i m5"><use href="#tcmp"/></svg>
      </div>
      <div class="treebox">
        <div class="tree">
          <div class="root"><svg class="i"><use href="#rootb"/></svg><span>Коромысло№2 (Тел-1)</span></div>
          <div class="rows">
            <div class="r"><em class="plus"></em><i class="lead"></i><svg class="i"><use href="#org"/></svg><span class="tight">(т) Начало координат</span></div>
            <div class="r"><i class="lead"></i><svg class="i"><use href="#sk"/></svg><span>Эскиз:1</span></div>
            <div class="r"><i class="lead"></i><svg class="i"><use href="#ext"/></svg><span>Операция выдавливания:1</span></div>
            <div class="r"><i class="lead"></i><svg class="i"><use href="#sk"/></svg><span>Эскиз:3</span></div>
            <div class="r"><i class="lead"></i><svg class="i"><use href="#sk"/></svg><span>Эскиз:4</span></div>
            <div class="r"><i class="lead"></i><svg class="i"><use href="#sk"/></svg><span>Эскиз:6</span></div>
            <div class="r"><i class="lead"></i><svg class="i"><use href="#op"/></svg><span>Операция выдавливания:2</span></div>
            <div class="r"><i class="lead"></i><svg class="i"><use href="#sk"/></svg><span>Эскиз:8</span></div>
            <div class="r"><i class="lead"></i><svg class="i"><use href="#cutb"/></svg><span>Вырезать элемент выдавливанием:1</span></div>
            <div class="r"><i class="lead"></i><svg class="i"><use href="#op"/></svg><span>Операция выдавливания:3</span></div>
            <div class="r"><i class="lead"></i><svg class="i"><use href="#fil"/></svg><span>Скругление:1</span></div>
            <div class="r"><i class="lead"></i><svg class="i"><use href="#fil"/></svg><span>Скругление:2</span></div>
            <div class="r"><i class="lead"></i><svg class="i"><use href="#cutb"/></svg><span>Вырезать элемент выдавливанием:2</span></div>
            <div class="r"><i class="lead"></i><svg class="i"><use href="#sk"/></svg><span>Эскиз:13</span></div>
            <div class="r"><i class="lead"></i><svg class="i"><use href="#cutb"/></svg><span>Вырезать элемент выдавливанием:3</span></div>
            <div class="r"><i class="lead"></i><svg class="i"><use href="#sk"/></svg><span>Эскиз:10</span></div>
            <div class="r"><i class="lead"></i><svg class="i"><use href="#op"/></svg><span>Операция выдавливания:4</span></div>
          </div>
        </div>
        <div class="vscroll"><b class="au"></b><div class="vthumb"><i class="gripv"></i></div><b class="ad"></b></div>
        <div class="hscroll"><b class="al"></b><div class="hthumb"><i class="griph"></i></div><b class="ar"></b></div>
      </div>
      <div class="propbox"></div>
      <div class="tabs"><div class="tab">Построение</div></div>
    </section>

    <section class="view">
      <svg class="model" viewBox="302 126 2060 1021">
        <defs>
          <linearGradient id="bodyG" gradientUnits="userSpaceOnUse" x1="1055" y1="0" x2="1460" y2="0"><stop offset="0" stop-color="#343434"/><stop offset=".28" stop-color="#2c2c2c"/><stop offset=".45" stop-color="#232323"/><stop offset=".6" stop-color="#1c1c1c"/><stop offset="1" stop-color="#1b1b1b"/></linearGradient>
          <linearGradient id="holeG" gradientUnits="userSpaceOnUse" x1="873" y1="0" x2="1002" y2="0"><stop offset="0" stop-color="#1e1e1e"/><stop offset=".55" stop-color="#474747"/><stop offset="1" stop-color="#4a4a4a"/></linearGradient>
          <linearGradient id="bandG" gradientUnits="userSpaceOnUse" x1="830" y1="0" x2="1045" y2="0"><stop offset="0" stop-color="#2f2f2f"/><stop offset=".5" stop-color="#3e3e3e"/><stop offset=".85" stop-color="#242424"/><stop offset="1" stop-color="#1d1d1d"/></linearGradient>
          <linearGradient id="earG" gradientUnits="userSpaceOnUse" x1="808" y1="0" x2="900" y2="0"><stop offset="0" stop-color="#2b2b2b"/><stop offset="1" stop-color="#3c3c3c"/></linearGradient>
          <linearGradient id="roundG" gradientUnits="userSpaceOnUse" x1="1142" y1="0" x2="1215" y2="0"><stop offset="0" stop-color="#2e2e2e"/><stop offset=".6" stop-color="#3a3a3a"/><stop offset="1" stop-color="#262626"/></linearGradient>
          <linearGradient id="ribG" gradientUnits="userSpaceOnUse" x1="1000" y1="0" x2="1160" y2="0"><stop offset="0" stop-color="#242424"/><stop offset=".5" stop-color="#363636"/><stop offset="1" stop-color="#2a2a2a"/></linearGradient>
          <linearGradient id="innerG" gradientUnits="userSpaceOnUse" x1="1071" y1="0" x2="1380" y2="0"><stop offset="0" stop-color="#232323"/><stop offset=".5" stop-color="#1b1b1b"/><stop offset="1" stop-color="#1e1e1e"/></linearGradient>
        </defs>
        <g class="edge">
          <path class="bd" d="M1053,740 L1067,893 C1078,945 1150,1004 1242,1004 C1340,1004 1445,950 1458,877 L1447,740 Z"/>
          <path class="lo" d="M1425,690 L1745,560 L1768,510 L1768,530 C1765,550 1750,590 1733,610 C1710,640 1690,650 1667,667 C1630,690 1600,705 1567,715 C1520,735 1470,742 1420,750 Z"/>
          <path class="ban" d="M1432,540 L1583,528 L1690,440 L1727,423 C1745,445 1762,480 1768,510 C1768,530 1755,560 1745,572 C1700,615 1650,648 1582,675 C1530,690 1480,700 1436,706 Z"/>
          <path class="fc2" d="M1432,538 L1583,528 C1610,525 1630,518 1650,505 C1675,490 1690,465 1690,432 L1727,423 C1735,435 1750,455 1758,490 C1762,520 1755,550 1737,562 C1700,600 1650,630 1580,657 C1530,672 1480,682 1435,687 L1422,617 L1415,590 Z"/>
          <path class="st" d="M1428,505 C1440,510 1450,510 1465,507 L1610,490 C1640,480 1657,450 1660,433 L1677,422 L1690,432 L1690,447 C1690,470 1675,490 1650,505 C1630,518 1610,525 1583,528 L1432,540 Z"/>
          <path class="ln" d="M1430,523 L1583,513 C1610,510 1630,500 1645,487 C1660,473 1670,455 1672,430 M1460,525 V538 M1583,514 V528 M1436,535 L1583,524 C1620,518 1650,500 1670,475 C1682,460 1688,445 1688,432"/>
          <path class="tb" d="M1605,425 L1605,402 C1605,392 1610,388 1617,385 L1693,343 C1700,342 1708,343 1714,348 L1724,355 C1728,362 1730,370 1730,377 L1733,427 L1690,432 L1677,422 C1665,425 1660,433 1657,445 C1652,460 1635,478 1611,488 Z"/>
          <path class="tb2" d="M1648,420 L1722,377 L1730,377 L1733,427 L1690,432 L1677,422 C1665,425 1660,433 1652,457 Z"/>
          <path class="ln" d="M1617,385 L1638,400 L1713,355 M1638,400 C1630,405 1626,412 1627,420 C1635,424 1642,424 1648,420 L1722,377 C1724,370 1722,362 1713,355 L1695,344 M1605,408 L1627,420 L1630,477 M1648,420 L1652,457 M1722,377 L1730,377"/>
          <path class="ln" d="M1737,562 L1745,572 L1733,610 M1580,657 L1582,675 L1568,715"/>

          <path class="back" d="M900,630 L915,604 L1230,573 L1300,650 L1430,700 L1400,790 L1192,770 L1147,750 L1030,750 Z"/>
          <path class="ear" d="M860,555 C838,565 815,590 808,617 L807,640 L823,717 L900,650 L925,610 C895,600 870,580 860,555 Z"/>
          <path class="dk" d="M1432,590 C1432,620 1350,645 1290,645 C1250,645 1215,640 1192,625 C1200,600 1215,585 1230,573 L1300,557 C1370,540 1421,490 1421,427 L1427,507 Z"/>
          <path class="dk" d="M920,610 L1230,573 C1215,585 1200,600 1192,626 L1160,632 L997,617 Z"/>
          <path class="dk2" d="M1031,450 L1031,473 C1031,495 1033,510 1037,518 L1043,503 Z"/>
          <path class="fc" d="M1031,450 C1031,370 1120,317 1240,317 C1340,317 1421,365 1421,427 C1421,490 1370,540 1300,557 L1230,573 L920,610 C895,600 870,580 860,555 L1013,535 C1025,530 1033,525 1037,517 C1045,510 1045,505 1043,503 C1040,490 1033,475 1031,450 Z"/>
          <ellipse class="inn" cx="1226" cy="444" rx="155" ry="101" transform="rotate(-5 1226 444)"/>

          <path class="ribc" d="M997,617 L1160,632 L1163,657 L1160,672 L1020,635 Z"/>
          <path class="ln" d="M1033,620 L1160,655"/>
          <path class="dk" d="M1020,635 L1160,672 L1142,722 L1050,690 Z"/>
          <path class="dk" d="M1050,690 L1142,722 L1147,750 L1143,770 L1100,743 C1080,740 1060,745 1027,748 L1000,760 Z"/>
          <path class="sl" d="M1100,743 L1143,770 L1147,750 C1130,748 1115,744 1100,743 Z"/>
          <path class="ln" d="M1050,697 L1140,727"/>

          <path class="fc" d="M1180,625 C1210,640 1250,645 1290,645 C1340,645 1390,632 1412,610 L1422,617 L1435,693 C1428,700 1415,703 1400,702 L1220,675 C1205,672 1190,662 1183,650 Z"/>
          <path class="ln" d="M1412,610 L1430,690 M1420,610 L1437,690"/>
          <path class="fl" d="M1183,650 C1190,662 1205,672 1220,675 L1400,702 C1415,703 1428,700 1435,693 L1436,705 C1430,718 1415,724 1397,723 L1217,697 C1190,690 1170,675 1163,657 Z"/>
          <path class="fl2" d="M1160,627 L1178,625 L1183,650 L1163,657 Z"/>
          <path class="ln" d="M1220,675 L1217,697 M1397,702 L1395,723"/>
          <path class="dk" d="M1217,697 L1397,723 L1370,792 L1192,765 Z"/>
          <path class="rd" d="M1163,657 C1170,675 1190,690 1217,697 L1192,765 C1165,757 1143,735 1142,723 Z"/>
          <path class="dk3" d="M1397,723 C1410,724 1428,718 1436,705 L1425,722 C1420,745 1412,770 1400,782 C1390,792 1380,793 1370,792 Z"/>
          <path class="dash" d="M1192,768 L1370,795"/>

          <ellipse class="bnd" cx="933" cy="689" rx="112" ry="76" transform="rotate(-8 933 689)"/>
          <ellipse class="dk" cx="937" cy="712" rx="113" ry="76" transform="rotate(-8 937 712)"/>
          <ellipse class="hol" cx="937" cy="712" rx="65" ry="43" transform="rotate(-8 937 712)"/>
        </g>
        <g class="triad">
          <path class="gr" d="M354,1090 L355,1072 L357,1062 L360,1072 L361,1092 Z"/>
          <path class="rd2" d="M361,1088 L362,1093 L340,1096 L322,1095 L340,1091 Z"/>
          <text class="ty" x="350" y="1058">Y</text>
          <text class="tz" x="347" y="1066">Z</text>
          <text class="tx" x="307" y="1102">X</text>
        </g>
      </svg>
    </section>
  </main>

  <footer class="status"><i class="vdots"></i><div class="cmd"></div></footer>
</div>
</body>
</html>
```
FILE: styles.css
```css
*{box-sizing:border-box}
html,body{margin:0;padding:0;height:100%;overflow:hidden}
body{background:#f0f0f0;font-family:"Noto Sans","Open Sans",sans-serif;color:#222}
.defs{position:absolute}
.app{width:2362px;height:1181px;display:flex;flex-direction:column}
.top{height:122px;flex:none}
.i{width:30px;height:30px;flex:none;display:block}
i,b,u{display:block;text-decoration:none}
.m2{margin-left:2px}.m3{margin-left:3px}.m4{margin-left:4px}.m5{margin-left:5px}.m6{margin-left:6px}.m7{margin-left:7px}.m8{margin-left:8px}.m9{margin-left:9px}.m10{margin-left:10px}.m11{margin-left:11px}.m12{margin-left:12px}.m13{margin-left:13px}.m14{margin-left:14px}.m15{margin-left:15px}.m17{margin-left:17px}.m9x{margin-left:13px}

.fx-t{font:400 21px "Liberation Sans",sans-serif;fill:#14145a;letter-spacing:-1px}
.q-g{font:700 25px "Liberation Sans",sans-serif;fill:#9c9c9c}
.q-b{font:700 25px "Liberation Sans",sans-serif;fill:#111}

.tbrow{display:flex;gap:2px}
.first{height:38px}
.second{height:40px;margin-top:3px}
.tbar{display:flex;align-items:center;padding-left:4px;height:100%;background:linear-gradient(#fff,#fbfbfb 60%,#dedede);border-bottom:2px solid #a6a6a6;border-radius:0 0 4px 0}
.t1{width:790px}
.t2{width:936px}
.t3{width:997px}
.dots{width:4px;height:28px;flex:none;background:radial-gradient(circle,#888 1px,transparent 1.4px) 0 0/4px 5px}
.sep{width:1px;height:30px;flex:none;background:#b4b4b4}
.grip{width:12px;align-self:stretch;flex:none;background:linear-gradient(90deg,#e8e8e8,#8f8f8f);position:relative}
.grip::after{content:"";position:absolute;left:3px;bottom:6px;width:6px;height:7px;border-top:2px solid #222;background:linear-gradient(#222,#222) 0 3px/6px 1px no-repeat}
.dd{width:6px;height:4px;flex:none;border-left:3px solid transparent;border-right:3px solid transparent;border-top:4px solid #222}
.dd.off{border-top-color:#999}
.on{display:flex;align-items:center;justify-content:center;flex:none;align-self:stretch;background:#cde4f7;border:2px solid #6aa9dc}
.w36{width:36px}.w37{width:37px}.w38{width:38px}.w39{width:39px}
.combo{display:flex;height:25px;background:#fff;border:1px solid #a5a5a5;flex:none;font-size:15px;line-height:23px}
.combo span{flex:1;padding-left:6px}
.cz{width:83px}
.c1{width:75px}
.c2{width:159px;background:#f2f2f2}
.serif{font-family:"Liberation Serif",serif;font-size:17px}
.cbtn{width:19px;display:flex;align-items:center;justify-content:center;background:linear-gradient(#fafafa,#dcdcdc);border-left:1px solid #aaa}
.xy{width:32px;display:flex;flex-direction:column;font-size:13px;line-height:16px;color:#777;flex:none;white-space:nowrap;padding-left:3px}
.star{font:normal 13px "DejaVu Sans",sans-serif;color:#888}
.xl{padding-left:17px}
.field{height:25px;flex:none;background:#f0f0f0;border:1px solid #aaa}
.w60{width:60px}.w62{width:62px}

.menu{display:flex;align-items:center;height:36px;margin-top:3px;padding-left:4px}
.menu .dots{height:24px}
.mico{width:20px;height:20px;margin-left:7px;flex:none}
.menu ul{display:flex;list-style:none;margin:0 0 0 11px;padding:0;gap:19.2px;font-size:14.5px}
.menu u{display:inline;text-decoration:underline}

.work{flex:1;display:flex;min-height:0;height:1025px}
.ltools{width:43px;flex:none;margin-top:46px;height:942px;display:flex;flex-direction:column;background:linear-gradient(90deg,#fff 0,#fbfbfb 70%,#cfcfcf 100%);border-radius:6px 0 0 0;padding-left:11px}
.hdots{height:4px;width:26px;margin:2px 0 3px 0;background:radial-gradient(circle,#888 1px,transparent 1.4px) 0 0/5px 4px}
.lgrp{display:flex;flex-direction:column}
.lgrp.a .i{height:29.3px}
.lact{width:30px;height:30px;border-width:1px;padding:0}
.lact .i{width:28px;height:28px!important}
.lgrp.b{gap:8px}
.ldiv{width:28px;height:2px;margin:5px 0 9px 0;border:0;background:#bdbdbd}
.ldiv.first{margin:5px 0 7px 0}
.ldiv.wide{margin:8px 0 9px 0}
.lend{margin:5px 0 0 -11px;height:15px;flex:none;background:linear-gradient(90deg,#e8e8e8,#9a9a9a);border-radius:0 0 0 8px;display:flex;justify-content:flex-end;align-items:center;padding-right:4px}
.lmore{width:8px;height:8px;border-left:5px solid transparent;border-top:4px solid transparent;border-bottom:4px solid transparent;background:linear-gradient(90deg,#111 2px,transparent 2px)}

.panel{width:252px;flex:none;margin-left:1px;display:flex;flex-direction:column;height:1025px}
.ptitle{height:27px;flex:none;display:flex;justify-content:space-between;align-items:center;padding:0 5px 0 5px;font-size:15px;background:#f2f2f2}
.pbtn{display:flex;gap:11px;align-items:center}
.pin{width:12px;height:12px;display:block}
.ptools{height:41px;flex:none;display:flex;align-items:center;padding-left:8px;background:linear-gradient(#fff,#f4f4f4)}
.ptools .on{margin-top:2px;margin-bottom:2px}
.treebox{width:241px;height:650px;flex:none;margin:3px 0 0 4px;display:grid;grid-template-columns:217px 20px;grid-template-rows:626px 20px;border:2px solid #a8a8a8;background:#fff}
.tree{overflow:hidden;font-size:15px}
.root{height:36px;display:flex;align-items:center;gap:9px;padding-left:7px}
.rows{margin-left:22px;border-left:1px dotted #666}
.r{height:35.2px;display:flex;align-items:center;white-space:nowrap;position:relative}
.r span{margin-left:13px}
.r span.tight{margin-left:9px}
.lead{width:22px;height:0;flex:none;border-top:1px dotted #777;margin-right:1px}
.plus{position:absolute;left:-5px;top:13px;width:10px;height:10px;background:linear-gradient(#fff,#d8d8ea);border:1px solid #8a8aa8;z-index:1}
.plus::before{content:"";position:absolute;left:1px;right:1px;top:3px;height:2px;background:#2a3a90}
.plus::after{content:"";position:absolute;top:1px;bottom:1px;left:3px;width:2px;background:#2a3a90}
.vscroll{display:flex;flex-direction:column;background:#f0f0f0;align-items:center;padding:0}
.au,.ad{width:0;border-left:5px solid transparent;border-right:5px solid transparent;flex:none}
.au{height:0;margin:8px 0 9px;border-bottom:5px solid #333}
.ad{height:0;margin:auto 0 8px;border-top:5px solid #333}
.vthumb{width:18px;height:250px;flex:none;background:linear-gradient(90deg,#f4f4f4,#dcdcdc 60%,#c6c6c6);border:1px solid #aaa;border-radius:3px;display:flex;align-items:center;justify-content:center}
.gripv{width:9px;height:8px;border-top:1px solid #666;border-bottom:1px solid #666;background:linear-gradient(#666,#666) 0 50%/9px 1px no-repeat}
.hscroll{grid-column:1/3;display:flex;align-items:center;background:#f0f0f0;padding-left:10px}
.al,.ar{width:0;height:0;border-top:5px solid transparent;border-bottom:5px solid transparent;flex:none}
.al{border-right:5px solid #333}
.hthumb{width:103px;height:19px;margin-left:8px;flex:none;background:linear-gradient(#f4f4f4,#d4d4d4);border:1px solid #aaa;border-radius:3px;display:flex;align-items:center;justify-content:center}
.griph{width:8px;height:9px;border-left:1px solid #666;border-right:1px solid #666;background:linear-gradient(#666,#666) 50% 0/1px 9px no-repeat}
.ar{margin-left:77px;border-left:5px solid #333}
.propbox{width:241px;height:272px;flex:none;margin:4px 0 0 4px;background:#f0f0f0;border:2px solid #a8a8a8}
.tabs{height:25px;flex:none;margin-top:4px;border-top:2px solid #555;background:linear-gradient(#f2f2f2,#dfdfdf);width:250px}
.tab{width:103px;height:25px;margin-top:-2px;margin-left:2px;background:#fff;border-right:2px solid #333;border-bottom:2px solid #333;font-size:15px;padding-left:7px;line-height:24px}

.view{flex:1;height:1025px;margin:1px 0 0 4px;position:relative;overflow:hidden;border-top:2px solid #9a9a9a;border-left:2px solid #8a8a8a;background:linear-gradient(#68a2de 0,#7aafe4 12%,#93bdea 27%,#b7d3f1 52%,#d2e4f6 70%,#ebf3fb 87%,#fff 97%)}
.model{position:absolute;left:0;top:0;width:2060px;height:1021px}
.edge path,.edge ellipse{stroke:#101010;stroke-width:.9;stroke-linejoin:round}
.edge .back{fill:#1d1d1d;stroke:none}
.bd{fill:url(#bodyG)}
.lo{fill:#212121}
.ban{fill:#2b2b2b}
.fc2{fill:#343434}
.st{fill:#2a2a2a}
.edge .ln{fill:none;stroke-width:.9}
.tb{fill:#333}
.tb2{fill:#2b2b2b}
.ear{fill:url(#earG)}
.dk{fill:#1d1d1d}
.dk2{fill:#242424}
.dk3{fill:#222}
.fc{fill:#3a3a3a}
.inn{fill:url(#innerG)}
.ribc{fill:url(#ribG)}
.sl{fill:#2f2f2f}
.fl{fill:#2e2e2e}
.fl2{fill:#343434}
.rd{fill:url(#roundG)}
.edge .dash{fill:none;stroke-dasharray:4 3}
.bnd{fill:url(#bandG)}
.hol{fill:url(#holeG)}
.gr{fill:#1c9a2c}
.rd2{fill:#e01818}
.triad text{font-size:13px;font-family:"Liberation Sans",sans-serif}
.ty{fill:#4ad8a0}
.tz{fill:#4a84d8}
.tx{fill:#d84050}

.status{height:34px;flex:none;display:flex;padding:0 0 0 45px;align-items:flex-end}
.vdots{width:4px;height:23px;margin-right:1px;background:radial-gradient(circle,#888 1px,transparent 1.4px) 0 0/4px 5px}
.cmd{flex:1;height:23px;background:#fff;border-top:2px solid #b0b0b0;border-left:2px solid #b0b0b0}
```
